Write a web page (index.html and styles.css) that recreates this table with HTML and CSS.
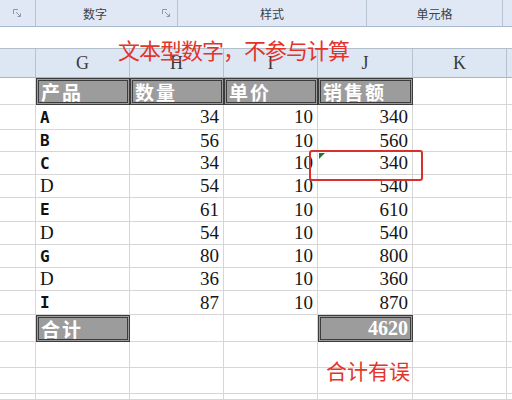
FILE: index.html
```html
<!DOCTYPE html>
<html lang="zh">
<head>
<meta charset="utf-8">
<title>文本型数字</title>
<link rel="stylesheet" href="styles.css">
</head>
<body>
<div class="page">
  <div class="ribbon">
    <div class="grp g0"><span class="launch"><svg width="9" height="9" viewBox="0 0 9 9"><path d="M0.5 5V0.5H5" stroke="#8d99a8" fill="none"/><path d="M3 3L7.5 7.5M4.5 7.5H7.5V4.5" stroke="#8d99a8" fill="none"/></svg></span></div>
    <div class="grp g1"><span class="lbl">数字</span><span class="launch"><svg width="9" height="9" viewBox="0 0 9 9"><path d="M0.5 5V0.5H5" stroke="#8d99a8" fill="none"/><path d="M3 3L7.5 7.5M4.5 7.5H7.5V4.5" stroke="#8d99a8" fill="none"/></svg></span></div>
    <div class="grp g2"><span class="lbl">样式</span></div>
    <div class="grp g3"><span class="lbl">单元格</span></div>
    <div class="grp g4"></div>
  </div>
  <div class="fbar"></div>
  <div class="sheet">
    <div class="ch"></div><div class="ch">G</div><div class="ch">H</div><div class="ch">I</div><div class="ch">J</div><div class="ch">K</div><div class="ch last"></div>

    <div class="c rn"></div><div class="hc">产品</div><div class="hc">数量</div><div class="hc">单价</div><div class="hc">销售额</div><div class="c"></div><div class="c last"></div>

    <div class="c rn"></div><div class="c t"><span class="ltr">A</span></div><div class="c n">34</div><div class="c n">10</div><div class="c n">340</div><div class="c"></div><div class="c last"></div>
    <div class="c rn"></div><div class="c t"><span class="ltr">B</span></div><div class="c n">56</div><div class="c n">10</div><div class="c n">560</div><div class="c"></div><div class="c last"></div>
    <div class="c rn"></div><div class="c t"><span class="ltr">C</span></div><div class="c n">34</div><div class="c n">10</div><div class="c n flag">340<span class="tri"></span></div><div class="c"></div><div class="c last"></div>
    <div class="c rn"></div><div class="c t"><span class="ltr d">D</span></div><div class="c n">54</div><div class="c n">10</div><div class="c n">540</div><div class="c"></div><div class="c last"></div>
    <div class="c rn"></div><div class="c t"><span class="ltr">E</span></div><div class="c n">61</div><div class="c n">10</div><div class="c n">610</div><div class="c"></div><div class="c last"></div>
    <div class="c rn"></div><div class="c t"><span class="ltr d">D</span></div><div class="c n">54</div><div class="c n">10</div><div class="c n">540</div><div class="c"></div><div class="c last"></div>
    <div class="c rn"></div><div class="c t"><span class="ltr">G</span></div><div class="c n">80</div><div class="c n">10</div><div class="c n">800</div><div class="c"></div><div class="c last"></div>
    <div class="c rn"></div><div class="c t"><span class="ltr d">D</span></div><div class="c n">36</div><div class="c n">10</div><div class="c n">360</div><div class="c"></div><div class="c last"></div>
    <div class="c rn"></div><div class="c t"><span class="ltr">I</span></div><div class="c n">87</div><div class="c n">10</div><div class="c n">870</div><div class="c"></div><div class="c last"></div>

    <div class="c rn"></div><div class="hc">合计</div><div class="c"></div><div class="c"></div><div class="hc num">4620</div><div class="c"></div><div class="c last"></div>

    <div class="c rn"></div><div class="c"></div><div class="c"></div><div class="c"></div><div class="c"></div><div class="c"></div><div class="c last"></div>
    <div class="c rn"></div><div class="c"></div><div class="c"></div><div class="c"></div><div class="c"></div><div class="c"></div><div class="c last"></div>
    <div class="c rn"></div><div class="c"></div><div class="c"></div><div class="c"></div><div class="c"></div><div class="c"></div><div class="c last"></div>
  </div>

  <div class="note note1">文本型数字，不参与计算</div>
  <div class="note note2">合计有误</div>
  <div class="box"></div>
</div>
</body>
</html>
```

FILE: styles.css
```css
html, body {
  margin: 0;
  padding: 0;
  background: #ffffff;
}

.page {
  position: relative;
  width: 512px;
  height: 400px;
  overflow: hidden;
  font-family: "Noto Sans CJK SC", "Noto Sans", sans-serif;
}

/* ribbon */
.ribbon {
  display: flex;
  height: 26px;
  background: #dfe8f4;
  border-bottom: 1px solid #a9b8cb;
  box-shadow: 0 1px 0 #c9d4e2;
}

.grp {
  display: flex;
  align-items: center;
  border-right: 1px solid #b7c4d4;
  box-sizing: border-box;
  height: 26px;
}

.g0 { width: 36px; justify-content: flex-end; padding-right: 7px; }
.g1 { width: 142px; }
.g2 { width: 189px; }
.g3 { width: 136px; }
.g4 { flex: 1; border-right: none; }

.lbl {
  flex: 1;
  text-align: center;
  font-size: 12px;
  color: #3a424c;
}

.g1 .lbl { padding-right: 8px; }

.launch {
  display: flex;
  width: 9px;
  height: 9px;
  margin-right: 6px;
}

.fbar {
  height: 21px;
  background: #ffffff;
  border-bottom: 1px solid #b4bfcc;
}

/* sheet grid */
.sheet {
  display: grid;
  grid-template-columns: 36px 94px 94px 94px 95px 94px 1fr;
  grid-template-rows: 29px 27px 25px 22px 23px 23px 24px 23px 23px 23px 24px 27px 26px 26px 1fr;
  height: 351px;
}

.ch {
  background: #dde7f3;
  border-right: 1px solid #b4c1d1;
  border-bottom: 1px solid #a8b5c6;
  display: flex;
  align-items: center;
  justify-content: center;
  font-family: "Liberation Serif", serif;
  font-size: 18px;
  color: #3a3a3a;
}

.c {
  border-right: 1px solid #d6d6d6;
  border-bottom: 1px solid #d6d6d6;
  display: flex;
  align-items: center;
  min-width: 0;
}

.last { border-right: none; }

.t { padding-left: 4px; }

.ltr {
  font-family: "DejaVu Sans Mono", monospace;
  font-weight: bold;
  font-size: 16px;
  color: #111111;
}

.ltr.d {
  font-family: "Liberation Serif", serif;
  font-weight: normal;
  font-size: 19px;
}

.n {
  justify-content: flex-end;
  padding-right: 4px;
  font-family: "Liberation Serif", serif;
  font-size: 19px;
  color: #151515;
}

.flag { position: relative; }

.tri {
  position: absolute;
  left: 1px;
  top: 1px;
  width: 0;
  height: 0;
  border-top: 6px solid #1f7a2a;
  border-right: 6px solid transparent;
}

.hc {
  background: #9c9c9c;
  border: 3px double #3c3c3c;
  display: flex;
  align-items: center;
  padding-left: 2px;
  color: #ffffff;
  font-weight: bold;
  font-size: 19px;
  letter-spacing: 2px;
}

.hc.num {
  justify-content: flex-end;
  padding-right: 2px;
  padding-left: 0;
  letter-spacing: 0;
  font-family: "Liberation Serif", serif;
  font-weight: bold;
  font-size: 20px;
}

/* annotations */
.note {
  position: absolute;
  color: #e3342c;
  line-height: 1;
  white-space: nowrap;
}

.note1 {
  left: 118px;
  top: 38px;
  font-size: 22px;
  letter-spacing: -1px;
}

.note2 {
  left: 326px;
  top: 360px;
  font-size: 21px;
}

.box {
  position: absolute;
  left: 309px;
  top: 150px;
  width: 110px;
  height: 27px;
  border: 2px solid #d9302c;
  border-radius: 3px;
}
```
